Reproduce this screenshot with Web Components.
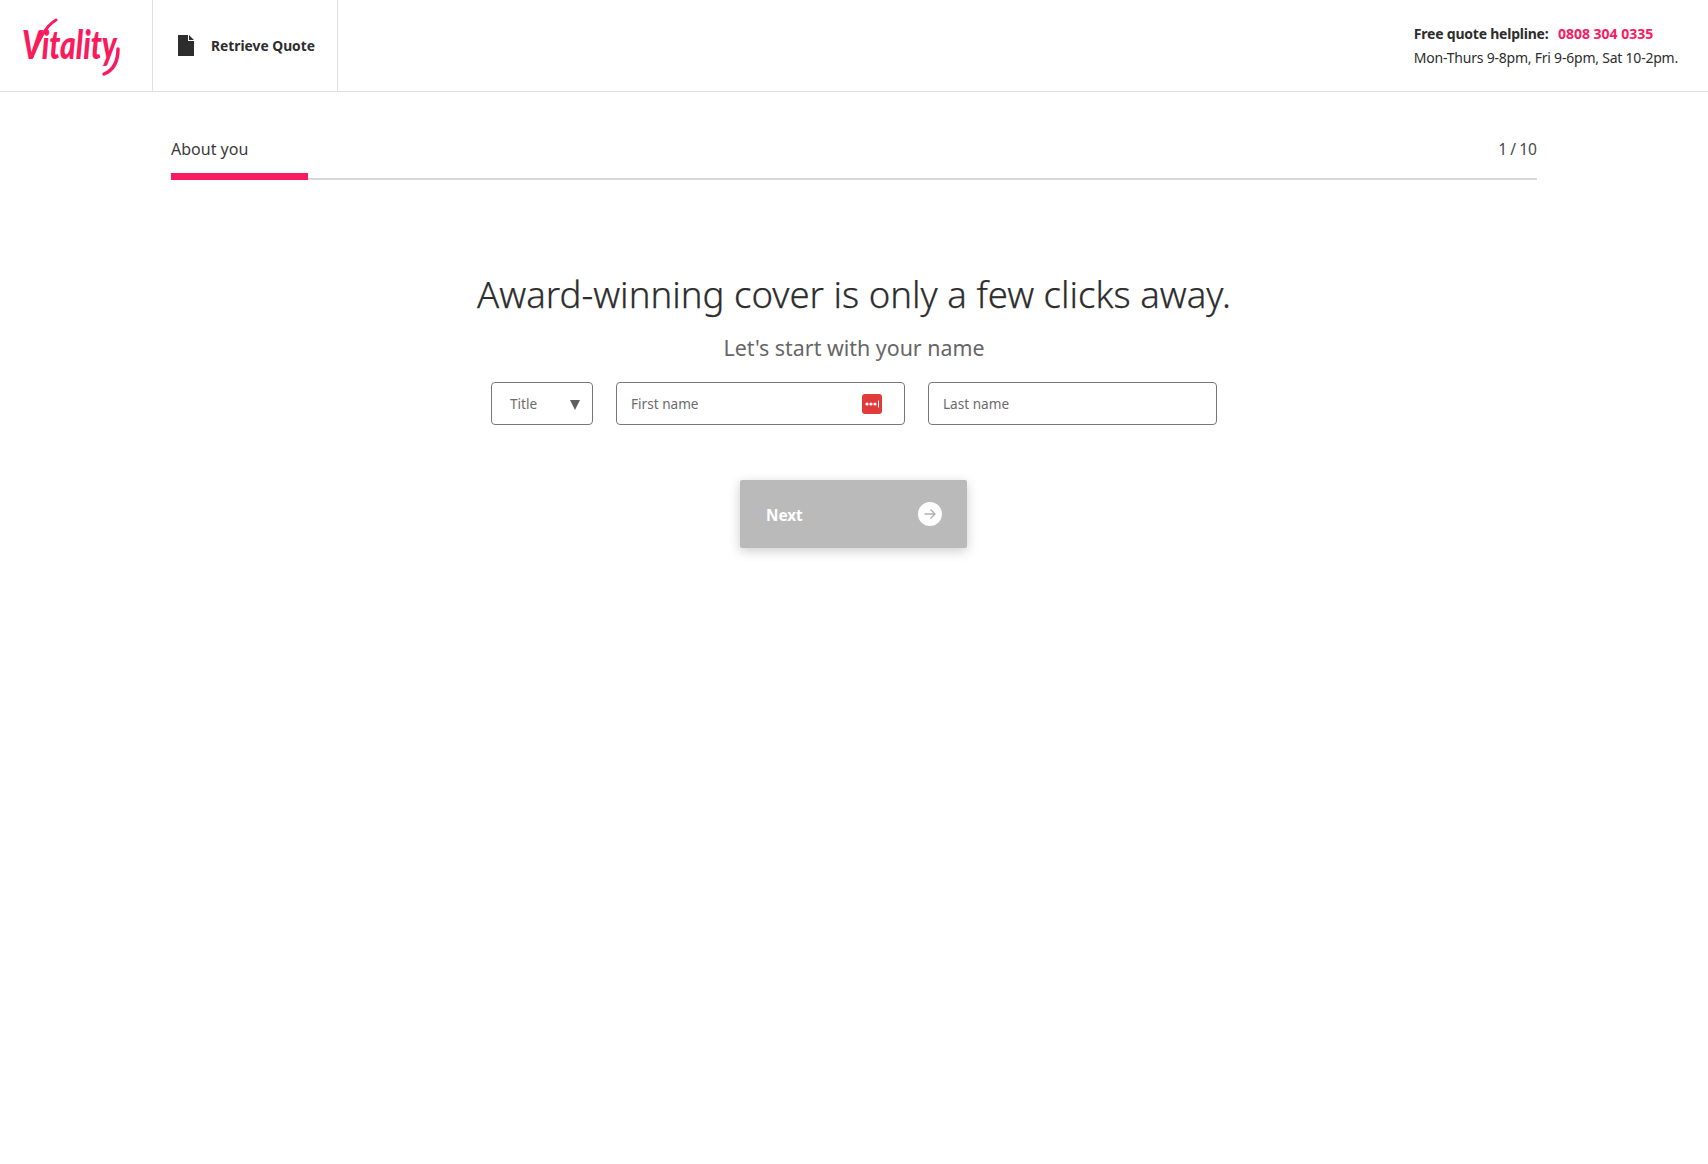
<!doctype html>
<html lang="en">
<head>
<meta charset="utf-8">
<title>Vitality - About you</title>
<style>
  html, body { margin: 0; background: #fff; }
  body { font-family: "Noto Sans", "Open Sans", sans-serif; color: #2d2d2d; min-height: 1164px; }
</style>
</head>
<body>
<vl-header></vl-header>
<vl-progress label="About you" step="1 / 10" percent="10"></vl-progress>
<vl-quote-form></vl-quote-form>

<script>
const FONT = `"Noto Sans", "Open Sans", sans-serif`;

// vl-header: logo, retrieve quote link, helpline
class VlHeader extends HTMLElement {
  constructor() {
    super();
    this.attachShadow({ mode: "open" });
  }

  connectedCallback() {
    this.shadowRoot.innerHTML = `
      <style>
        :host {
          display: flex;
          height: 91px;
          border-bottom: 1px solid #e2e2e2;
          box-sizing: content-box;
          font-family: ${FONT};
          color: #2d2d2d;
        }
        .logo {
          width: 153px;
          box-sizing: border-box;
          border-right: 1px solid #e2e2e2;
          display: flex;
          align-items: center;
          padding-left: 21px;
        }
        .logo svg { display: block; }
        .retrieve {
          width: 185px;
          box-sizing: border-box;
          border-right: 1px solid #e2e2e2;
          display: flex;
          align-items: center;
          gap: 17px;
          padding-left: 25px;
          font-size: 13.8px;
          font-weight: 700;
        }
        .helpline {
          margin-left: auto;
          padding-right: 30px;
          display: flex;
          flex-direction: column;
          justify-content: center;
          gap: 5px;
          font-size: 14px;
          line-height: 19px;
          letter-spacing: -0.22px;
        }
        .helpline strong { font-weight: 700; }
        .phone { color: #fa1a5e; font-weight: 700; margin-left: 6px; letter-spacing: 0; }
      </style>
      <div class="logo">
        <svg width="104" height="62" viewBox="0 0 104 62" aria-label="Vitality">
          <text transform="translate(1 44) scale(1 1.35)" font-family="Lato, sans-serif" font-style="italic" font-weight="900"
            font-size="30" fill="#fa1a5e">Vitality</text>
          <path d="M11 42 C17 28 23 12 35 5" fill="none" stroke="#fa1a5e" stroke-width="3" stroke-linecap="round"/>
          <path d="M97 34 C97 46 93 55 83 59" fill="none" stroke="#fa1a5e" stroke-width="3.5" stroke-linecap="round"/>
        </svg>
      </div>
      <div class="retrieve">
        <svg width="16" height="21" viewBox="0 0 16 21">
          <path d="M0 0H10V6H16V21H0Z M11 0L16 5H11Z" fill="#2d2d2d"/>
        </svg>
        <span>Retrieve Quote</span>
      </div>
      <div class="helpline">
        <div><strong>Free quote helpline:</strong> <span class="phone">0808 304 0335</span></div>
        <div>Mon-Thurs 9-8pm, Fri 9-6pm, Sat 10-2pm.</div>
      </div>
    `;
  }
}

// vl-progress: step label and bar
class VlProgress extends HTMLElement {
  constructor() {
    super();
    this.attachShadow({ mode: "open" });
  }

  connectedCallback() {
    const pct = this.getAttribute("percent") || 0;
    this.shadowRoot.innerHTML = `
      <style>
        :host {
          display: block;
          margin: 0 171px;
          padding-top: 45px;
          font-family: ${FONT};
          color: #3a3a3a;
        }
        .labels {
          display: flex;
          justify-content: space-between;
          font-size: 16px;
          line-height: 24px;
          margin-bottom: 12px;
        }
        .step { font-size: 15.6px; word-spacing: -1px; color: #4a4a4a; }
        .bar {
          height: 7px;
          background: linear-gradient(to bottom, transparent 5px, #d8d8d8 5px);
        }
        .fill { height: 100%; width: 137px; background: #fa1a5e; }
      </style>
      <div class="labels">
        <span>${this.getAttribute("label")}</span>
        <span class="step">${this.getAttribute("step")}</span>
      </div>
      <div class="bar"><div class="fill" style="width: ${pct}%"></div></div>
    `;
  }
}

// vl-field: bordered input look, optional slot for an icon at the right
class VlField extends HTMLElement {
  constructor() {
    super();
    this.attachShadow({ mode: "open" });
    this.shadowRoot.innerHTML = `
      <style>
        :host {
          display: flex;
          align-items: center;
          justify-content: space-between;
          box-sizing: border-box;
          height: 43px;
          padding: 0 14px;
          border: 1px solid #77777a;
          border-radius: 4px;
          font-size: 13.6px;
          color: #6c6c6c;
          background: #fff;
        }
      </style>
      <slot></slot>
      <slot name="end"></slot>
    `;
  }
}

// vl-next-button: disabled grey next button
class VlNextButton extends HTMLElement {
  constructor() {
    super();
    this.attachShadow({ mode: "open" });
    this.shadowRoot.innerHTML = `
      <style>
        :host {
          display: flex;
          align-items: center;
          justify-content: space-between;
          box-sizing: border-box;
          width: 227px;
          height: 68px;
          padding: 0 25px 0 26px;
          background: #bababa;
          border-radius: 2px;
          box-shadow: 0 3px 12px rgba(0, 0, 0, 0.2);
          color: #fff;
          font-size: 15.3px;
          font-weight: 700;
        }
        span { padding-top: 2px; }
        svg { display: block; }
      </style>
      <span><slot></slot></span>
      <svg width="24" height="24" viewBox="0 0 24 24">
        <circle cx="12" cy="12" r="12" fill="#fff"/>
        <path d="M6.5 12H17M12.5 7.5L17 12L12.5 16.5" fill="none" stroke="#b0b0b0" stroke-width="1.3"/>
      </svg>
    `;
  }
}

// vl-quote-form: heading, name fields, next
class VlQuoteForm extends HTMLElement {
  constructor() {
    super();
    this.attachShadow({ mode: "open" });
  }

  connectedCallback() {
    this.shadowRoot.innerHTML = `
      <style>
        :host {
          display: flex;
          flex-direction: column;
          align-items: center;
          padding-top: 89px;
          font-family: ${FONT};
        }
        h1 {
          margin: 0;
          font-size: 36.6px;
          line-height: 50px;
          font-weight: 300;
          -webkit-text-stroke: 0.25px #2d2d2d;
          color: #2d2d2d;
        }
        h2 {
          margin: 14px 0 0;
          font-size: 21.4px;
          line-height: 30px;
          font-weight: 400;
          color: #666;
        }
        .fields {
          display: flex;
          gap: 23px;
          margin-top: 19px;
        }
        .title { width: 102px; padding-left: 18px; padding-right: 12px; }
        .name { width: 289px; }
        .arrow { width: 0; height: 0; border-left: 5px solid transparent; border-right: 5px solid transparent; border-top: 10px solid #5f5f5f; margin-top: 2px; }
        .lastpass { display: block; margin-right: 8px; }
        vl-next-button { margin-top: 55px; margin-right: 1px; }
      </style>
      <h1>Award-winning cover is only a few clicks away.</h1>
      <h2>Let's start with your name</h2>
      <div class="fields">
        <vl-field class="title">Title<span class="arrow" slot="end"></span></vl-field>
        <vl-field class="name">First name
          <svg class="lastpass" slot="end" width="20" height="20" viewBox="0 0 20 20">
            <rect width="20" height="20" rx="3" fill="#e03a3a"/>
            <circle cx="5" cy="10" r="1.6" fill="#fff"/>
            <circle cx="9" cy="10" r="1.6" fill="#fff"/>
            <circle cx="13" cy="10" r="1.6" fill="#fff"/>
            <rect x="16" y="6.5" width="1" height="7" fill="#fff"/>
          </svg>
        </vl-field>
        <vl-field class="name">Last name</vl-field>
      </div>
      <vl-next-button>Next</vl-next-button>
    `;
  }
}

customElements.define("vl-header", VlHeader);
customElements.define("vl-progress", VlProgress);
customElements.define("vl-field", VlField);
customElements.define("vl-next-button", VlNextButton);
customElements.define("vl-quote-form", VlQuoteForm);
</script>
</body>
</html>
